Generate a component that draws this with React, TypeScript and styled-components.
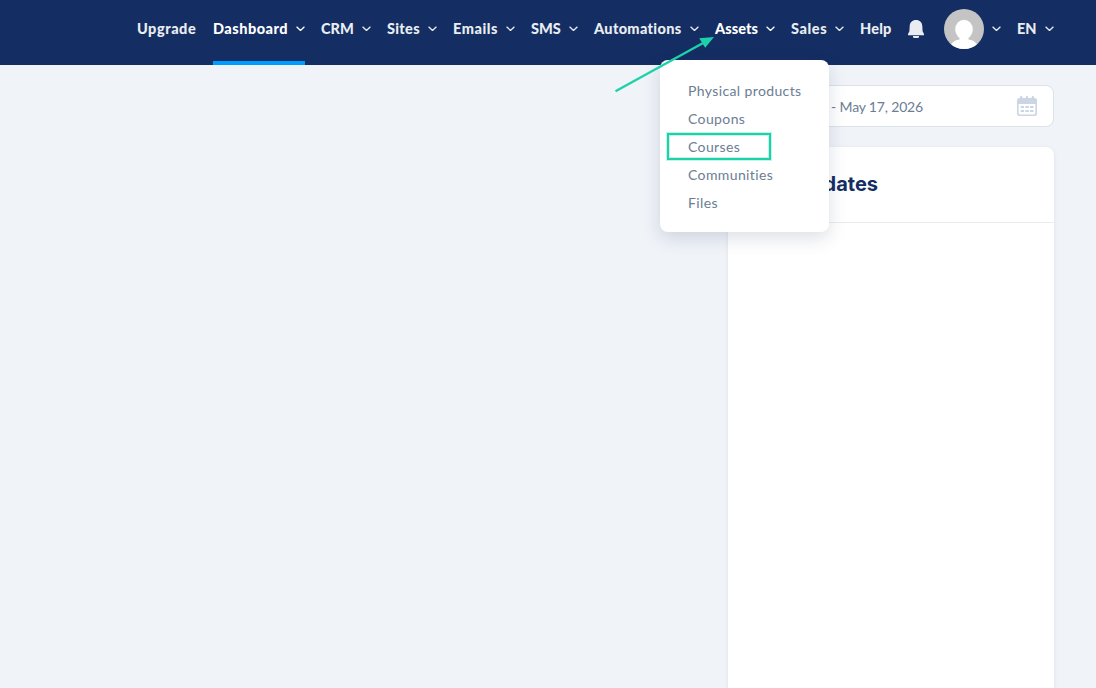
import React from 'react';
import styled, { createGlobalStyle } from 'styled-components';

const GlobalStyle = createGlobalStyle`
  *, *::before, *::after { box-sizing: border-box; }
  html, body { margin: 0; height: 100%; overflow: hidden; }
  body { background: #f0f3f8; font-family: Lato, 'Liberation Sans', sans-serif; }
`;

const Page = styled.div`
  position: relative;
  display: flex;
  flex-direction: column;
  height: 688px;
  overflow: hidden;
`;

const TopBar = styled.header`
  display: flex;
  justify-content: flex-end;
  flex: none;
  height: 65px;
  padding-right: 42px;
  background: #142d63;
`;

const Nav = styled.nav`
  display: flex;
  gap: 16px;
`;

const NavItem = styled.a<{ $active?: boolean; $bright?: boolean }>`
  display: flex;
  align-items: center;
  gap: 8px;
  height: 65px;
  padding-bottom: 7px;
  color: ${(p) => (p.$active || p.$bright ? '#ffffff' : '#e9edf1')};
  box-shadow: ${(p) => (p.$active ? 'inset 0 -4px 0 #009bff' : 'none')};
`;

const NavLabel = styled.span<{ $width: number; $tracking?: number }>`
  width: ${(p) => p.$width}px;
  font-size: 14.5px;
  font-weight: 900;
  line-height: 20px;
  letter-spacing: ${(p) => p.$tracking ?? 0}px;
  white-space: nowrap;
`;

const ChevronIcon = styled.svg`
  flex: none;
  width: 9px;
  height: 6px;
  margin-top: -1px;
`;

const BellIcon = styled.svg`
  width: 16px;
  height: 18px;
  margin-right: 4px;
`;

const AvatarIcon = styled.svg`
  width: 40px;
  height: 40px;
`;

const Main = styled.main`
  display: flex;
  flex: 1;
  justify-content: flex-end;
  padding: 20px 42px 0 0;
`;

const Sidebar = styled.aside`
  display: flex;
  flex-direction: column;
  gap: 20px;
  width: 326px;
`;

const DateField = styled.div`
  display: flex;
  align-items: center;
  justify-content: space-between;
  height: 42px;
  padding: 0 16px 0 15px;
  border: 1px solid #dde2e9;
  border-radius: 8px;
  background: #fff;
`;

const DateText = styled.span`
  display: flex;
  justify-content: flex-end;
  width: 179px;
  padding-top: 2px;
  color: #6b7d93;
  font-size: 14px;
  line-height: 20px;
  letter-spacing: -0.17px;
  white-space: nowrap;
`;

const CalendarIcon = styled.svg`
  width: 20px;
  height: 20px;
`;

const Card = styled.section`
  flex: 1;
  border-radius: 8px 8px 0 0;
  background: #fff;
  box-shadow: 0 1px 4px rgba(30, 50, 90, 0.09);
`;

const CardHeader = styled.div`
  display: flex;
  align-items: center;
  height: 76px;
  padding: 0 0 2px 65px;
  border-bottom: 1px solid #e9ecf0;
`;

const CardTitle = styled.h2`
  width: 85px;
  margin: 0;
  color: #142d63;
  font: 700 20px/24px Inter, sans-serif;
  text-align: right;
`;

const Menu = styled.div`
  position: absolute;
  top: 60px;
  left: 660px;
  width: 169px;
  height: 172px;
  padding: 17px 28px 15px;
  border-radius: 8px;
  background: #fff;
  box-shadow: 0 6px 18px rgba(20, 40, 80, 0.15);
`;

const MenuItem = styled.a`
  display: block;
  height: 28px;
  color: #6b7d93;
  font-size: 14px;
  line-height: 28px;
  letter-spacing: 0.38px;
  white-space: nowrap;
`;

const Highlight = styled.div`
  position: absolute;
  top: 133px;
  left: 667px;
  width: 104px;
  height: 27px;
  border: 2px solid #1dd1a9;
  box-shadow: 0 0 0 1px #1dd1a940, inset 0 0 0 1px #1dd1a940;
`;

const Arrow = styled.svg`
  position: absolute;
  top: 30px;
  left: 610px;
  width: 110px;
  height: 70px;
`;

const Chevron = () => (
  <ChevronIcon viewBox="0 0 9 6" fill="none" stroke="currentColor" strokeWidth="1.35" strokeLinecap="round" strokeLinejoin="round">
    <path d="M.9 1.1 4.5 4.4 8.1 1.1" />
  </ChevronIcon>
);

type Entry = { label: string; width: number; tracking?: number; active?: boolean; bright?: boolean; plain?: boolean };

const entries: Entry[] = [
  { label: 'Upgrade', width: 60, tracking: 0.55, plain: true },
  { label: 'Dashboard', width: 75, tracking: 0.5, active: true },
  { label: 'CRM', width: 33 },
  { label: 'Sites', width: 33, tracking: 0.3 },
  { label: 'Emails', width: 45, tracking: 0.55 },
  { label: 'SMS', width: 30 },
  { label: 'Automations', width: 88, tracking: 0.33 },
  { label: 'Assets', width: 43, tracking: 0.05, bright: true },
  { label: 'Sales', width: 36, tracking: 0.6 },
  { label: 'Help', width: 32, tracking: 0.2, plain: true },
];

const menuEntries = ['Physical products', 'Coupons', 'Courses', 'Communities', 'Files'];

export default function App() {
  return (
    <Page>
      <GlobalStyle />
      <TopBar>
        <Nav>
          {entries.map((e) => (
            <NavItem key={e.label} $active={e.active} $bright={e.bright}>
              <NavLabel $width={e.width} $tracking={e.tracking}>{e.label}</NavLabel>
              {!e.plain && <Chevron />}
            </NavItem>
          ))}
          <NavItem>
            <BellIcon viewBox="0 0 16 18" fill="currentColor">
              <path d="M8 0C4.2 0 1.9 2.5 1.7 6L1.4 11.2 0 14V15.2H16V14L14.6 11.2 14.3 6C14.1 2.5 11.8 0 8 0ZM5 16H11V16.7Q11 18 9.7 18H6.3Q5 18 5 16.7Z" />
            </BellIcon>
          </NavItem>
          <NavItem>
            <AvatarIcon viewBox="0 0 40 40">
              <defs><clipPath id="avatar"><circle cx="20" cy="20" r="20" /></clipPath></defs>
              <g clipPath="url(#avatar)">
                <rect width="40" height="40" fill="#c4c4c4" />
                <ellipse cx="20" cy="20.5" rx="8.8" ry="9.8" fill="#fff" />
                <path d="M6 38Q8 31 15.5 30.5 20 33 24.5 30.5 32 31 34 38V40H6Z" fill="#fff" />
                <path d="M15.5 27H24.5V32H15.5Z" fill="#fff" />
              </g>
            </AvatarIcon>
            <Chevron />
          </NavItem>
          <NavItem>
            <NavLabel $width={20}>EN</NavLabel>
            <Chevron />
          </NavItem>
        </Nav>
      </TopBar>
      <Main>
        <Sidebar>
          <DateField>
            <DateText>May 11, 2026 - May 17, 2026</DateText>
            <CalendarIcon viewBox="0 0 20 20">
              <path fill="#cbd5e3" fillRule="evenodd" d="M0 4.5Q0 2 2.5 2H3V1.2Q3 0 4.2 0T5.4 1.2V2H8.8V1.2Q8.8 0 10 0T11.2 1.2V2H14.6V1.2Q14.6 0 15.8 0T17 1.2V2H17.5Q20 2 20 4.5V17.5Q20 20 17.5 20H2.5Q0 20 0 17.5ZM1.6 8V17Q1.6 18.4 3 18.4H17Q18.4 18.4 18.4 17V8Z" />
              <path stroke="#cbd5e3" strokeWidth="2" strokeDasharray="3.4 1.3" d="M3.7 11H16.5M3.7 15H16.5" />
            </CalendarIcon>
          </DateField>
          <Card>
            <CardHeader><CardTitle>Updates</CardTitle></CardHeader>
          </Card>
        </Sidebar>
      </Main>
      <Menu>
        {menuEntries.map((label) => (
          <MenuItem key={label}>{label}</MenuItem>
        ))}
      </Menu>
      <Highlight />
      <Arrow viewBox="0 0 110 70">
        <path d="M5.5 61.3 94 12.5" stroke="#1dd1a9" strokeWidth="2.4" />
        <path d="M104 7 89.2 8.2 95.2 17.8Z" fill="#1dd1a9" />
      </Arrow>
    </Page>
  );
}
